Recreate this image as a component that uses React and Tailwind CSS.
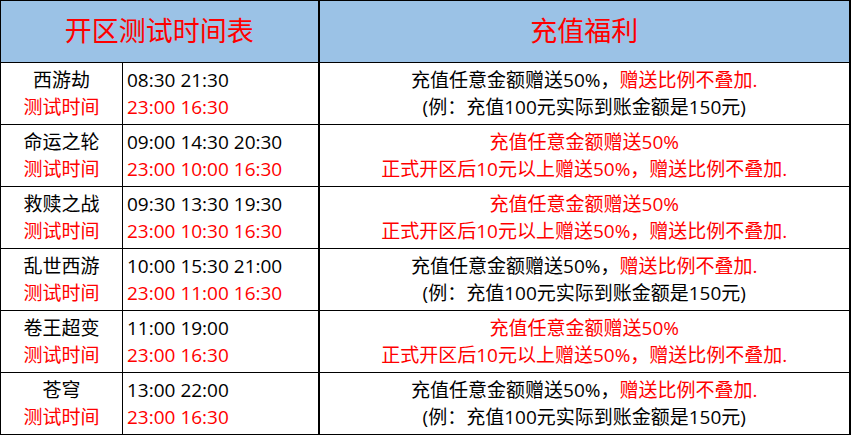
const rows = [
  { name: "西游劫", times: "08:30 21:30", test: "23:00 16:30", type: "a" },
  { name: "命运之轮", times: "09:00 14:30 20:30", test: "23:00 10:00 16:30", type: "b" },
  { name: "救赎之战", times: "09:30 13:30 19:30", test: "23:00 10:30 16:30", type: "b" },
  { name: "乱世西游", times: "10:00 15:30 21:00", test: "23:00 11:00 16:30", type: "a" },
  { name: "卷王超变", times: "11:00 19:00", test: "23:00 16:30", type: "b" },
  { name: "苍穹", times: "13:00 22:00", test: "23:00 16:30", type: "a" },
];

function Bonus({ type }) {
  if (type === "a") {
    return (
      <>
        <div>
          充值任意金额赠送50%，<span className="text-[#ff0000]">赠送比例不叠加.</span>
        </div>
        <div>(例：充值100元实际到账金额是150元)</div>
      </>
    );
  }
  return (
    <div className="text-[#ff0000]">
      <div>充值任意金额赠送50%</div>
      <div>正式开区后10元以上赠送50%，赠送比例不叠加.</div>
    </div>
  );
}

export default function App() {
  return (
    <div
      className="w-[852px] h-[435px] bg-white text-black"
      style={{ fontFamily: '"Open Sans", "Noto Sans CJK SC", sans-serif' }}
    >
      <table className="w-[851px] border-collapse table-fixed">
        <colgroup>
          <col className="w-[122px]" />
          <col className="w-[196px]" />
          <col />
        </colgroup>
        <thead>
          <tr className="h-[62px] bg-[#9bc2e6]">
            <th
              colSpan={2}
              className="border border-black text-[27px] font-normal text-[#ff0000] text-center"
            >
              开区测试时间表
            </th>
            <th className="border border-black border-l-2 border-r-2 text-[27px] font-normal text-[#ff0000] text-center">
              充值福利
            </th>
          </tr>
        </thead>
        <tbody>
          {rows.map((r, i) => (
            <tr key={i} className="h-[62px] text-[19px] leading-[27px]">
              <td className="border border-black text-center align-middle">
                <div>{r.name}</div>
                <div className="text-[#ff0000]">测试时间</div>
              </td>
              <td className="border border-black pl-[4px] align-middle">
                <div>{r.times}</div>
                <div className="text-[#ff0000]">{r.test}</div>
              </td>
              <td className="border border-black border-l-2 border-r-2 text-center align-middle">
                <Bonus type={r.type} />
              </td>
            </tr>
          ))}
        </tbody>
      </table>
    </div>
  );
}
